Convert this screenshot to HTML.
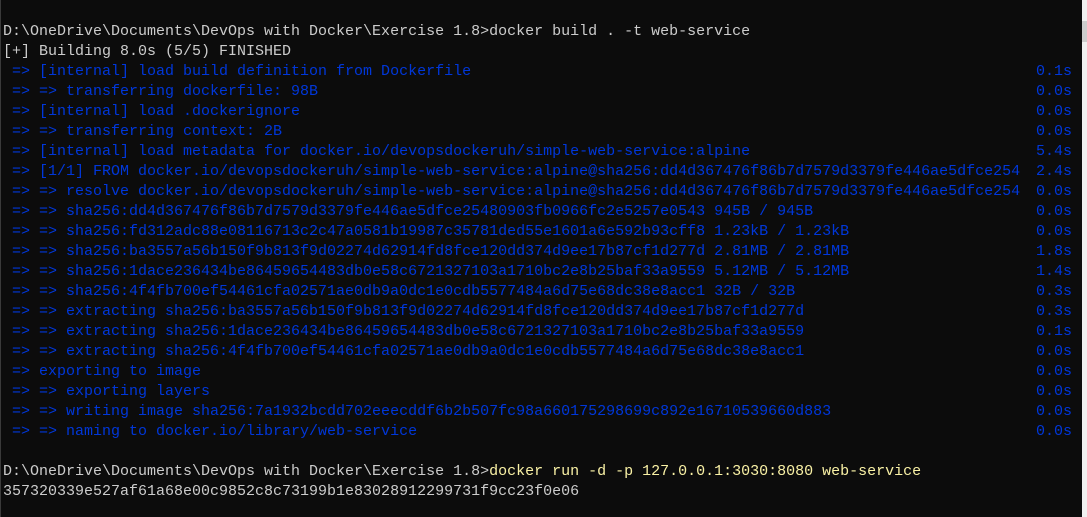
<html><head><style>
body{margin:0;width:1087px;height:517px;background:#0c0c0c;overflow:hidden;position:relative}
.t{position:absolute;left:3px;top:22px;width:1069px;font:15px/20px "Liberation Mono",monospace;color:#cccccc}
.r{display:flex;justify-content:space-between;height:20px;white-space:pre}
.b{color:#0037da}.y{color:#f9f1a5}
.sb{position:absolute;right:0;top:0;width:5px;height:517px;background:#f0f0f0}
.th{position:absolute;right:0;top:21px;width:5px;height:21px;background:#cdcdcd}
.lb{position:absolute;left:0;top:0;width:1px;height:517px;background:#3a3a3a}
</style></head><body>
<div class="lb"></div>
<div class="t">
<div class="r"><span>D:\OneDrive\Documents\DevOps with Docker\Exercise 1.8&gt;docker build . -t web-service</span></div>
<div class="r"><span>[+] Building 8.0s (5/5) FINISHED</span></div>
<div class="r b"><span> =&gt; [internal] load build definition from Dockerfile</span><span>0.1s</span></div>
<div class="r b"><span> =&gt; =&gt; transferring dockerfile: 98B</span><span>0.0s</span></div>
<div class="r b"><span> =&gt; [internal] load .dockerignore</span><span>0.0s</span></div>
<div class="r b"><span> =&gt; =&gt; transferring context: 2B</span><span>0.0s</span></div>
<div class="r b"><span> =&gt; [internal] load metadata for docker.io/devopsdockeruh/simple-web-service:alpine</span><span>5.4s</span></div>
<div class="r b"><span> =&gt; [1/1] FROM docker.io/devopsdockeruh/simple-web-service:alpine@sha256:dd4d367476f86b7d7579d3379fe446ae5dfce254</span><span>2.4s</span></div>
<div class="r b"><span> =&gt; =&gt; resolve docker.io/devopsdockeruh/simple-web-service:alpine@sha256:dd4d367476f86b7d7579d3379fe446ae5dfce254</span><span>0.0s</span></div>
<div class="r b"><span> =&gt; =&gt; sha256:dd4d367476f86b7d7579d3379fe446ae5dfce25480903fb0966fc2e5257e0543 945B / 945B</span><span>0.0s</span></div>
<div class="r b"><span> =&gt; =&gt; sha256:fd312adc88e08116713c2c47a0581b19987c35781ded55e1601a6e592b93cff8 1.23kB / 1.23kB</span><span>0.0s</span></div>
<div class="r b"><span> =&gt; =&gt; sha256:ba3557a56b150f9b813f9d02274d62914fd8fce120dd374d9ee17b87cf1d277d 2.81MB / 2.81MB</span><span>1.8s</span></div>
<div class="r b"><span> =&gt; =&gt; sha256:1dace236434be86459654483db0e58c6721327103a1710bc2e8b25baf33a9559 5.12MB / 5.12MB</span><span>1.4s</span></div>
<div class="r b"><span> =&gt; =&gt; sha256:4f4fb700ef54461cfa02571ae0db9a0dc1e0cdb5577484a6d75e68dc38e8acc1 32B / 32B</span><span>0.3s</span></div>
<div class="r b"><span> =&gt; =&gt; extracting sha256:ba3557a56b150f9b813f9d02274d62914fd8fce120dd374d9ee17b87cf1d277d</span><span>0.3s</span></div>
<div class="r b"><span> =&gt; =&gt; extracting sha256:1dace236434be86459654483db0e58c6721327103a1710bc2e8b25baf33a9559</span><span>0.1s</span></div>
<div class="r b"><span> =&gt; =&gt; extracting sha256:4f4fb700ef54461cfa02571ae0db9a0dc1e0cdb5577484a6d75e68dc38e8acc1</span><span>0.0s</span></div>
<div class="r b"><span> =&gt; exporting to image</span><span>0.0s</span></div>
<div class="r b"><span> =&gt; =&gt; exporting layers</span><span>0.0s</span></div>
<div class="r b"><span> =&gt; =&gt; writing image sha256:7a1932bcdd702eeecddf6b2b507fc98a660175298699c892e16710539660d883</span><span>0.0s</span></div>
<div class="r b"><span> =&gt; =&gt; naming to docker.io/library/web-service</span><span>0.0s</span></div>
<div class="r"><span> </span></div>
<div class="r"><span>D:\OneDrive\Documents\DevOps with Docker\Exercise 1.8&gt;<span class="y">docker run -d -p 127.0.0.1:3030:8080 web-service</span></span></div>
<div class="r"><span>357320339e527af61a68e00c9852c8c73199b1e83028912299731f9cc23f0e06</span></div>
</div>
<div class="sb"></div><div class="th"></div>
</body></html>
